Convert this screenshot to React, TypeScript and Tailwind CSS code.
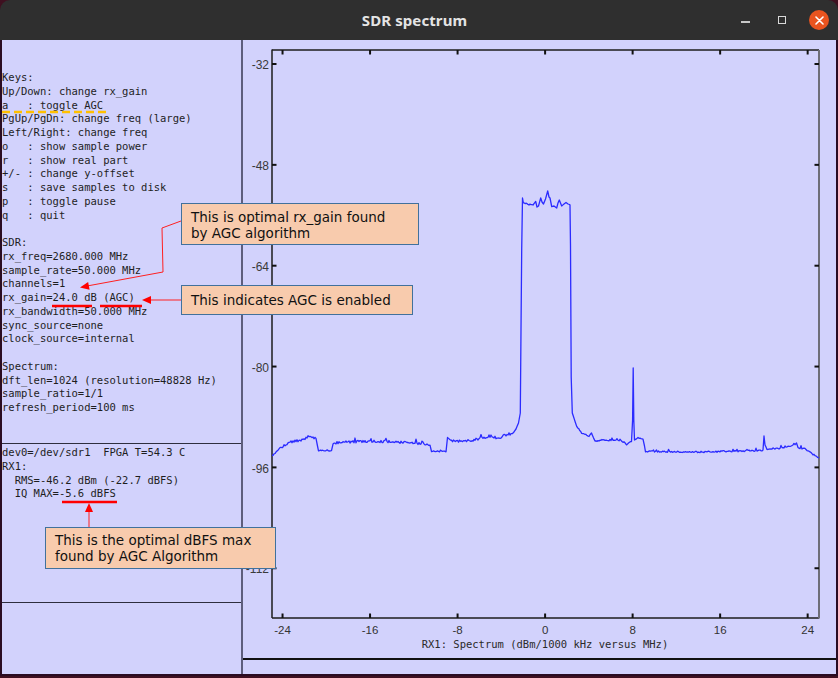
import React from "react";

function rand(i: number) {
  const s = Math.sin(i * 12.9898 + 78.233) * 43758.5453;
  return s - Math.floor(s);
}

type K = [number, number, number];
const keys: K[] = [
  [272, 456, 0.8], [280, 448, 1], [290, 442, 1.2], [301, 440, 1.2], [306, 438, 1], [310, 436.5, 1],
  [316, 438.5, 0.5], [317.5, 446, 0], [318.5, 450.5, 0.6], [331.5, 450.5, 0.6], [333, 443, 1.2],
  [358, 441.5, 1.3], [388, 441.5, 1.3], [411, 443, 1.3], [430, 445, 1], [431.5, 451, 0.6],
  [446, 451.5, 0.6], [447.5, 437.5, 0], [451.5, 441, 1.2], [468, 441, 1.5], [484, 438, 1.5],
  [491, 435.5, 1.5], [499, 439, 1.5], [503, 435, 1.5], [512.5, 433.5, 0.5], [516, 429, 0],
  [518.5, 423, 0], [520.3, 413, 0], [521, 330, 0], [521.7, 250, 0], [522.5, 198, 0],
  [523.3, 203, 0.6], [528, 204, 0.8], [533, 205, 0], [535.7, 201.5, 0], [537, 207, 0], [538.5, 206, 0],
  [540.7, 198, 0], [542, 202, 0], [543.5, 204, 0], [545.5, 199, 0], [547.7, 191, 0], [549, 197, 0],
  [550, 198, 0], [551.7, 206.5, 0], [554, 206, 0], [556.7, 208, 0], [558, 203, 0], [559.3, 200, 0],
  [560.5, 203, 0], [561.7, 206, 0], [564, 204, 0], [566, 202.5, 0], [568, 204, 0], [569.5, 204.5, 0],
  [570, 205, 0], [570.5, 246, 0], [571.2, 377, 0], [572.3, 413, 0], [576.7, 426.5, 0.3],
  [581.7, 433, 0.5], [589, 436, 0.5], [591.5, 433, 0], [595, 441.5, 0.8], [600, 440, 0.8],
  [620, 440, 1], [626.5, 444.5, 0.5], [631.5, 441.5, 0], [632.6, 420, 0], [633.2, 368, 0],
  [633.8, 420, 0], [634.5, 440, 0], [638, 438, 0.5], [643, 439.5, 0.5], [644.5, 446, 0],
  [645.5, 451.5, 0.7], [700, 452, 0.8], [763, 450.5, 0.8], [764, 436, 0], [765, 445, 0],
  [767, 449, 0.8], [783, 448, 1], [790, 446.5, 1], [796.5, 443, 0], [798, 448, 0.8],
  [805, 449, 0.8], [816.5, 456.5, 0.5], [819, 458, 0],
];

function buildTrace() {
  const pts: string[] = [];
  let idx = 0;
  for (let k = 0; k < keys.length - 1; k++) {
    const [x1, y1, a1] = keys[k];
    const [x2, y2] = keys[k + 1];
    pts.push(`${x1},${(y1 + (rand(idx++) - 0.5) * 2 * a1).toFixed(2)}`);
    const span = x2 - x1;
    const n = Math.floor(span);
    for (let j = 1; j < n; j++) {
      const t = j / span;
      let y = y1 + (y2 - y1) * t + (rand(idx++) - 0.5) * 2 * a1;
      if (a1 > 0 && rand(idx++ + 1000) > 0.95) y -= 2.5 * a1;
      pts.push(`${x1 + j},${y.toFixed(2)}`);
    }
  }
  const last = keys[keys.length - 1];
  pts.push(`${last[0]},${last[1]}`);
  return pts.join(" ");
}

const trace = buildTrace();

function head(x1: number, y1: number, x2: number, y2: number, len = 9, hw = 4) {
  const dx = x2 - x1;
  const dy = y2 - y1;
  const d = Math.hypot(dx, dy);
  const ux = dx / d;
  const uy = dy / d;
  const bx = x2 - ux * len;
  const by = y2 - uy * len;
  const px = -uy;
  const py = ux;
  return `${x2},${y2} ${bx + px * hw},${by + py * hw} ${bx - px * hw},${by - py * hw}`;
}

const yTicks = [-32, -48, -64, -80, -96, -112].map((v, i) => ({ v, y: 64 + 100.85 * i }));
const xTicks = [-24, -16, -8, 0, 8, 16, 24].map((v) => ({ v, x: 545.1 + 10.94 * v }));

const mono = { fontFamily: '"DejaVu Sans Mono", "Liberation Mono", monospace' };

const keysText = `Keys:
Up/Down: change rx_gain
a   : toggle AGC
PgUp/PgDn: change freq (large)
Left/Right: change freq
o   : show sample power
r   : show real part
+/- : change y-offset
s   : save samples to disk
p   : toggle pause
q   : quit

SDR:
rx_freq=2680.000 MHz
sample_rate=50.000 MHz
channels=1
rx_gain=24.0 dB (AGC)
rx_bandwidth=50.000 MHz
sync_source=none
clock_source=internal

Spectrum:
dft_len=1024 (resolution=48828 Hz)
sample_ratio=1/1
refresh_period=100 ms`;

const devText = `dev0=/dev/sdr1  FPGA T=54.3 C
RX1:
  RMS=-46.2 dBm (-22.7 dBFS)
  IQ MAX=-5.6 dBFS`;

function Callout({ className, lines }: { className: string; lines: string[] }) {
  return (
    <div
      className={`absolute bg-[#f8cbad] border border-[#41719c] text-[13.5px] leading-[16px] text-[#111] ${className}`}
      style={{ fontFamily: '"DejaVu Sans", Verdana, sans-serif' }}
    >
      {lines.map((l, i) => (
        <div key={i} className="whitespace-pre">{l}</div>
      ))}
    </div>
  );
}

export default function App() {
  return (
    <div className="relative w-[838px] h-[678px] bg-[#3f1020] overflow-hidden">
      {/* title bar */}
      <div className="h-[40px] bg-[#2f2f2f] rounded-t-[10px] flex items-center">
        <div className="flex-1" />
        <div
          className="text-[15px] font-bold text-[#e4e4e4] tracking-[0.1px]"
          style={{ fontFamily: '"Noto Sans", "Open Sans", sans-serif' }}
        >
          SDR spectrum
        </div>
        <div className="flex-1 flex items-center justify-end pr-[9px] gap-0">
          <div className="w-[9px] h-[2px] bg-[#c8c8c8] mt-[4px]" />
          <div className="w-[8px] h-[8px] border border-[#d8d8d8] ml-[28px]" />
          <div className="w-[20px] h-[20px] rounded-full bg-[#e9541f] ml-[23px] flex items-center justify-center">
            <svg width="9" height="9" viewBox="0 0 9 9">
              <path d="M1 1 L8 8 M8 1 L1 8" stroke="#fff" strokeWidth="1.6" strokeLinecap="round" />
            </svg>
          </div>
        </div>
      </div>

      {/* body */}
      <div className="flex h-[636px] border-l-2 border-r-2 border-b-2 border-[#2a0c22] bg-[#d2d2fc]">
        {/* left panel */}
        <div className="w-[239px] flex flex-col text-[10.5px] leading-[13.75px] text-[#1e1e1e]" style={mono}>
          <div className="h-[403px] pt-[31px] whitespace-pre">{keysText}</div>
          <div className="h-[1px] bg-[#2e2e3e]" />
          <div className="h-[158px] pt-[2px] whitespace-pre">{devText}</div>
          <div className="h-[1px] bg-[#2e2e3e]" />
          <div className="flex-1" />
        </div>
        <div className="w-[2px] bg-[#5e5e7c]" />
        {/* right panel */}
        <div className="flex-1 flex flex-col">
          <div className="h-[618px]">
            <svg width="593" height="618" viewBox="243 40 593 618">
              {/* axes */}
              <line x1="272" y1="50" x2="819" y2="50" stroke="#1c1c1c" strokeWidth="1.5" />
              <line x1="272" y1="49.5" x2="272" y2="618" stroke="#1c1c1c" strokeWidth="1.5" />
              <line x1="272" y1="618" x2="819" y2="618" stroke="#1c1c1c" strokeWidth="1.5" />
              <line x1="819" y1="50" x2="819" y2="618.5" stroke="#6e6e78" strokeWidth="2" />
              {yTicks.map((t) => (
                <g key={t.v}>
                  <line x1="272" y1={t.y} x2="276.5" y2={t.y} stroke="#111" strokeWidth="2" />
                  <line x1="814.5" y1={t.y} x2="819" y2={t.y} stroke="#111" strokeWidth="2" />
                  <text
                    x="269"
                    y={t.y + 2}
                    textAnchor="end"
                    dominantBaseline="middle"
                    fontSize="12"
                    fill="#3a3a3a"
                    style={{ fontFamily: '"Liberation Sans", Arial, sans-serif' }}
                  >
                    {t.v}
                  </text>
                </g>
              ))}
              {xTicks.map((t) => (
                <g key={t.v}>
                  <line x1={t.x} y1="50" x2={t.x} y2="54.5" stroke="#111" strokeWidth="2" />
                  <line x1={t.x} y1="613.5" x2={t.x} y2="618" stroke="#111" strokeWidth="2" />
                  <text
                    x={t.x}
                    y="631"
                    textAnchor="middle"
                    dominantBaseline="middle"
                    fontSize="11.5"
                    fill="#333"
                    style={{ fontFamily: '"Liberation Sans", Arial, sans-serif' }}
                  >
                    {t.v}
                  </text>
                </g>
              ))}
              <text
                x="545"
                y="644.5"
                textAnchor="middle"
                dominantBaseline="middle"
                fontSize="10.5"
                fill="#2a2a2a"
                style={mono}
              >
                RX1: Spectrum (dBm/1000 kHz versus MHz)
              </text>
              <polyline points={trace} fill="none" stroke="#2b2bff" strokeWidth="1.3" strokeLinejoin="round" />
            </svg>
          </div>
          <div className="h-[2px] bg-[#111]" />
          <div className="flex-1" />
        </div>
      </div>

      {/* annotations overlay */}
      <svg className="absolute left-0 top-0 pointer-events-none" width="838" height="678">
        <line x1="2" y1="112" x2="106" y2="112" stroke="#ffc000" strokeWidth="2.5" strokeDasharray="8 4" />
        <line x1="52" y1="306" x2="92" y2="306" stroke="#ff0000" strokeWidth="2.5" />
        <line x1="100" y1="306" x2="142" y2="306" stroke="#ff0000" strokeWidth="2.5" />
        <line x1="62" y1="502" x2="117" y2="502" stroke="#ff0000" strokeWidth="2.5" />
        <polyline points="181,221 162,228 163,272 87,286" fill="none" stroke="#ff2020" strokeWidth="1" />
        <polygon points={head(163, 272, 80, 287.5)} fill="#ff0000" />
        <line x1="181" y1="300" x2="150" y2="300" stroke="#ff2020" strokeWidth="1" />
        <polygon points={head(181, 300, 142, 300)} fill="#ff0000" />
        <line x1="89" y1="527" x2="89" y2="510" stroke="#ff2020" strokeWidth="1" />
        <polygon points={head(89, 527, 89, 503)} fill="#ff0000" />
      </svg>
      <Callout
        className="left-[181px] top-[203px] w-[238px] h-[42px] pl-[9px] pt-[5px]"
        lines={["This is optimal rx_gain found", "by AGC algorithm"]}
      />
      <Callout
        className="left-[181px] top-[285px] w-[232px] h-[30px] pl-[9px] pt-[6px]"
        lines={["This indicates AGC is enabled"]}
      />
      <Callout
        className="left-[45px] top-[527px] w-[231px] h-[42px] pl-[9px] pt-[4px]"
        lines={["This is the optimal dBFS max", "found by AGC Algorithm"]}
      />
    </div>
  );
}
